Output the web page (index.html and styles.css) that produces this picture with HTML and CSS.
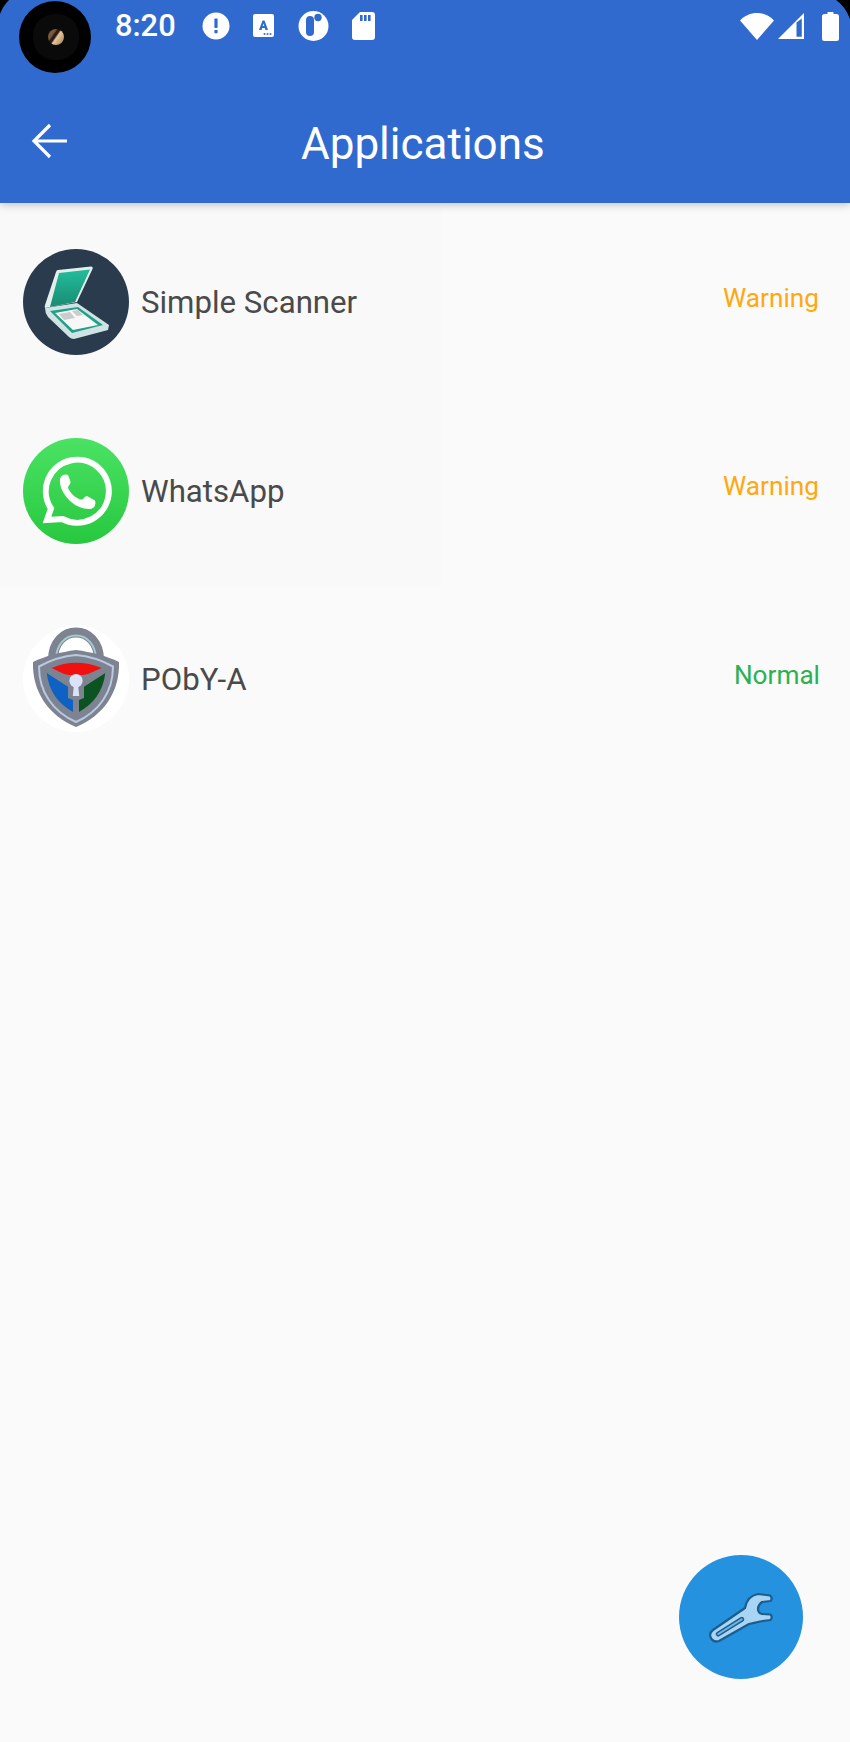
FILE: index.html
```html
<!DOCTYPE html>
<html lang="en">
<head>
<meta charset="utf-8">
<title>Applications</title>
<link rel="stylesheet" href="styles.css">
</head>
<body>
<div class="screen">
  <header class="appbar">
    <div class="status">
      <span class="clock">8:20</span>
      <div class="status-left">
        <svg width="28" height="28" viewBox="0 0 28 28"><circle cx="14" cy="14" r="13.500" fill="#fff"/><rect x="12.400" y="6.500" width="3.200" height="9.500" rx=".8" fill="#316ace"/><rect x="12.400" y="18" width="3.200" height="3.200" rx=".6" fill="#316ace"/></svg>
        <svg width="22" height="24" viewBox="0 0 22 24"><rect x="0" y="0" width="21" height="23" rx="2" fill="#fff"/><path d="M6 16 L9.500 6.500 h2 L15 16 h-2.600 l-.6-2 h-2.600 l-.6 2z M9.700 12 h1.600 l-.8-2.600z" fill="#316ace" fill-rule="evenodd"/><circle cx="11.500" cy="20" r="1" fill="#316ace"/><circle cx="14.500" cy="20" r="1" fill="#316ace"/><circle cx="17.500" cy="20" r="1" fill="#316ace"/></svg>
        <svg width="31" height="30" viewBox="0 0 31 30"><circle cx="15.500" cy="15" r="15" fill="#fff"/><rect x="8" y="5" width="8" height="20" rx="4" fill="#316ace"/><circle cx="20" cy="6.500" r="3.700" fill="#316ace"/></svg>
        <svg width="23" height="28" viewBox="0 0 23 28"><path d="M8 0 H20 a3 3 0 0 1 3 3 V25 a3 3 0 0 1-3 3 H3 a3 3 0 0 1-3-3 V8z" fill="#fff"/><rect x="8" y="3" width="2.600" height="6" fill="#316ace"/><rect x="12" y="3" width="2.600" height="6" fill="#316ace"/><rect x="16" y="3" width="2.600" height="6" fill="#316ace"/></svg>
      </div>
      <div class="status-right">
        <svg class="wifi" width="34" height="28" viewBox="0 0 34 28"><path d="M0 8.500 C9 -1.500 25 -1.500 34 8.500 L17 28z" fill="#fff"/></svg>
        <svg class="signal" width="28" height="28" viewBox="0 0 28 28"><path d="M27 1 V27 H1z M19.500 10.500 L19.500 24.800 H24.800 V6.500z" fill="#fff" fill-rule="evenodd"/></svg>
        <svg width="17" height="29" viewBox="0 0 17 29"><path d="M5.500 0 h6 v2 h3 a2.500 2.500 0 0 1 2.500 2.500 V26.500 a2.500 2.500 0 0 1-2.500 2.500 h-12 A2.500 2.500 0 0 1 0 26.500 V4.500 A2.500 2.500 0 0 1 2.500 2 h3z" fill="#fff"/></svg>
      </div>
    </div>
    <div class="toolbar">
      <svg class="back" width="38" height="38" viewBox="0 0 38 38"><path d="M36 19 H3 M19 3 L3 19 L19 35" fill="none" stroke="#fff" stroke-width="3.200"/></svg>
      <h1 class="title">Applications</h1>
    </div>
  </header>

  <main class="list">
    <div class="panel"></div>
    <div class="row">
      <svg class="avatar" viewBox="0 0 106 106">
        <defs><linearGradient id="lid" x1="0" y1="0" x2="0" y2="1"><stop offset="0" stop-color="#22bd9c"/><stop offset="1" stop-color="#1b8b74"/></linearGradient></defs>
        <circle cx="53" cy="53" r="53" fill="#2b3b4e"/>
        <path d="M35 21 L68 17.500 Q70.500 18 69.500 20 L54 53 L22 59 Q21.500 58 22 56 L33 23 Q33.500 21 35 21z" fill="#e3efec"/>
        <path d="M36 24 L67 20.500 L52 53 L27 58z" fill="url(#lid)"/>
        <path d="M22 59 L54 54 L86 76 L85 81 L51 90 Q48 90 46 88 L25 68 Q22 64 22 59z" fill="#cfe3e4"/>
        <path d="M27 62 L55 58 L80 76 L49 84z" fill="#1fa187"/>
        <path d="M32 64 L54 60 L75 76 L50 81z" fill="#f6f7f6"/>
        <path d="M36 65 L47 63 L52 69 L41 71z M49 62 L55 61 L60 66 L54 67z" fill="#c9cccb"/>
      </svg>
      <span class="name">Simple Scanner</span>
      <span class="badge warn">Warning</span>
    </div>
    <div class="row">
      <svg class="avatar" viewBox="0 0 106 106">
        <defs><linearGradient id="wa" x1="0" y1="0" x2="0" y2="1"><stop offset="0" stop-color="#4be264"/><stop offset="1" stop-color="#27c83f"/></linearGradient></defs>
        <circle cx="53" cy="53" r="53" fill="url(#wa)"/>
        <path d="M24 82 L28 70.500 A31.500 31.500 0 1 1 39.500 81 z" fill="none" stroke="#fff" stroke-width="6" stroke-linejoin="miter"/>
        <path d="M40 37 Q36 39 37 45 Q38 54 47 63 Q56 71 66 71 Q72 71 72.500 65 L72 62.500 L64 58 Q62 58 60 61 Q58 62 56 61 Q49 58 45 50 Q45 48 47 46 Q48 44 47 42 L45 37 Q43 36 40 37z" fill="#fff"/>
      </svg>
      <span class="name">WhatsApp</span>
      <span class="badge warn">Warning</span>
    </div>
    <div class="row">
      <svg class="avatar" viewBox="0 0 106 106">
        <circle cx="53" cy="53" r="53" fill="#fff"/>
        <path d="M30 34 C30 -2.700 76 -2.700 76 34" fill="none" stroke="#7d8391" stroke-width="10"/>
        <path d="M33 34 C33 1.300 73 1.300 73 34" fill="none" stroke="#a5c9cc" stroke-width="2"/>
        <path d="M53 24 C68 26 84 30 96 36 C97 66 80 90 53 101 C26 90 9 66 10 36 C22 30 38 26 53 24z" fill="#7d8391"/>
        <path d="M53 29 C66 30 80 35 90 40.500 C90 66 76 86 53 96 C30 86 16 66 16 40.500 C26 35 40 30 53 29z" fill="none" stroke="#b9c9e2" stroke-width="2"/>
        <path d="M28.700 42 C44 35 62 35 78.700 42 L65 48 L60 49 L46 49 L41 48z" fill="#f01010"/>
        <path d="M23.700 47 L45 60.700 L45 72 L50 74 L50 86 C36 78 26 66 23.700 47z" fill="#0d62c4"/>
        <path d="M82.300 47 L61 60.700 L61 72 L56 74 L56 86 C70 78 80 66 82.300 47z" fill="#0c5322"/>
        <circle cx="53" cy="54.700" r="6.700" fill="#d9e2f6"/>
        <path d="M50.800 60 h4.400 l1 10 h-6.400z" fill="#d9e2f6"/>
      </svg>
      <span class="name">PObY-A</span>
      <span class="badge ok">Normal</span>
    </div>
  </main>

  <div class="camera"><div class="lens"></div></div>
  <svg class="corner corner-l" width="10" height="15" viewBox="0 0 10 15"><path d="M0 0 H9 Q3 6 0 14z" fill="#000"/></svg>
  <svg class="corner corner-r" width="14" height="20" viewBox="0 0 14 20"><path d="M14 0 H0 Q9 6 14 19z" fill="#000"/></svg>

  <button class="fab" type="button" aria-label="Tools">
    <svg width="70" height="60" viewBox="0 0 70 60"><path d="M39 21 Q41 9 52 7 L64 8.500 Q67 11 64.500 14 L56 15 Q52 18 52 22 Q52 26 56 27 L64.500 27.500 Q67 30 64.500 33 L54 34.500 Q48 36 43 37 L13 54 Q7 56 4.500 50 Q3 46 7 43z" fill="#a9d5f5" stroke="#1c5d8b" stroke-width="2.200" stroke-linejoin="round"/><path d="M12.300 47 L35.700 32.300" stroke="#1c5d8b" stroke-width="5" stroke-linecap="round"/><path d="M12.300 47 L35.700 32.300" stroke="#6fb4e3" stroke-width="2" stroke-linecap="round"/></svg>
  </button>
</div>
</body>
</html>
```

FILE: styles.css
```css
* { box-sizing: border-box; }
html, body { margin: 0; padding: 0; }
body { font-family: Roboto, "Noto Sans", sans-serif; background: #fafafa; }
.screen { position: relative; width: 850px; height: 1742px; overflow: hidden; background: #fafafa; }

.appbar { height: 203px; background: #316ace; box-shadow: 0 2px 8px rgba(0,0,0,.22); color: #fff; position: relative; z-index: 2; }
.status { height: 52px; display: flex; align-items: center; padding: 0 11px 0 115px; }
.clock { font-size: 30.800px; font-weight: 500; line-height: 52px; width: 61px; white-space: nowrap; }
.status-left { display: flex; align-items: center; gap: 23px; margin-left: 26px; }
.status-right { display: flex; align-items: center; gap: 17px; margin-left: auto; }
.wifi { margin-right: -14px; }
.toolbar { height: 151px; display: flex; align-items: center; padding: 27px 0 0 31px; }
.back { flex: none; }
.title { font-size: 44px; font-weight: 400; margin: 5px 0 0 232px; line-height: 52px; }

.list { position: relative; padding-top: 46px; }
.panel { position: absolute; left: 0; top: 0; width: 441px; height: 383px; background: #f9f9f9; }
.row { position: relative; height: 188.500px; display: flex; align-items: flex-start; padding-left: 23px; }
.avatar { width: 106px; height: 106px; flex: none; }
.name { margin-left: 12px; font-size: 31.200px; line-height: 108px; color: #4a4a4a; }
.badge { margin-left: auto; font-size: 26.200px; line-height: 30px; margin-top: 33.500px; }
.warn { color: #ffa80f; padding-right: 31px; }
.ok { color: #2bb052; padding-right: 30px; }

.camera { position: absolute; left: 19px; top: 1px; width: 72px; height: 72px; border-radius: 50%; background: #000; z-index: 3; display: flex; align-items: center; justify-content: center; padding: 0 0 1px 1px; }
.lens { width: 16px; height: 16px; border-radius: 50%; background: linear-gradient(125deg, #7a5a3c 0 30%, #2a1c12 38% 46%, #e6c69a 54%, #a07a52 100%); box-shadow: 0 0 0 15px #0a0a0a; }
.corner { position: absolute; top: 0; z-index: 3; }
.corner-l { left: 0; }
.corner-r { right: 0; }

.fab { position: absolute; left: 679px; top: 1555px; width: 124px; height: 124px; border: 0; padding: 0; border-radius: 50%; background: #2492df; display: flex; align-items: center; justify-content: center; z-index: 3; }
```
